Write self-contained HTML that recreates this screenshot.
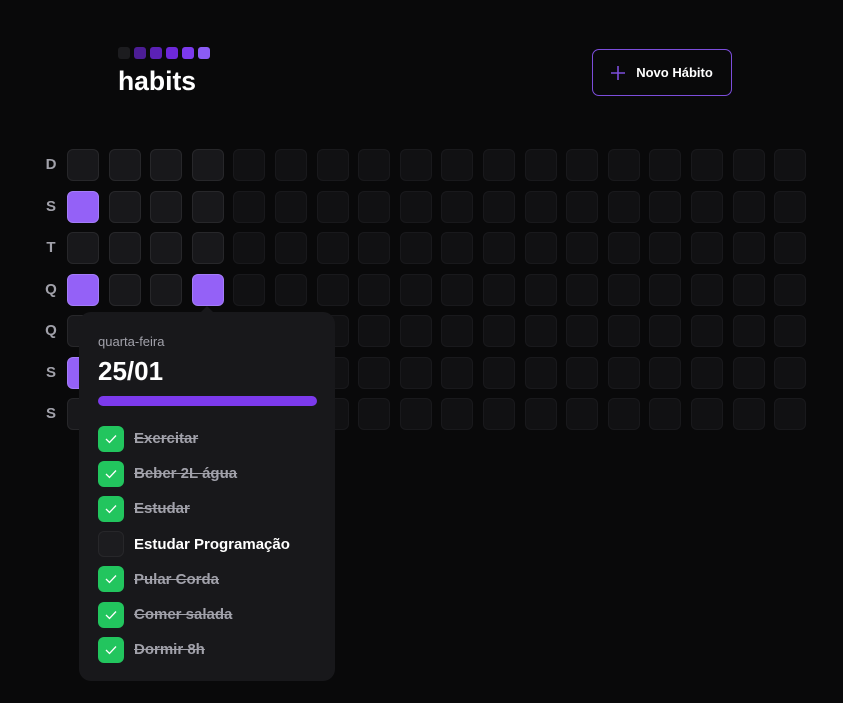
<!DOCTYPE html>
<html><head><meta charset="utf-8"><style>
*{box-sizing:border-box;margin:0;padding:0}
body{width:843px;height:703px;background:#09090a;font-family:"Liberation Sans",sans-serif;position:relative;overflow:hidden;color:#fff}
.logo{position:absolute;left:118px;top:47px;display:flex;gap:4px}
.logo i{width:12px;height:12px;border-radius:3px;display:block}
h1{position:absolute;left:118px;top:66px;font-size:26.5px;font-weight:bold;letter-spacing:0}
.btn{position:absolute;left:592px;top:49px;width:140px;height:47px;border:1px solid #7c4ddb;border-radius:7px;display:flex;align-items:center;justify-content:center;gap:11px;font-size:13px;font-weight:bold}
.labels{position:absolute;left:44px;top:149px}
.labels div{height:41.5px;line-height:32px;width:14px;text-align:center;color:#a1a1aa;font-weight:bold;font-size:15px}
.grid{position:absolute;left:67px;top:149px;display:grid;grid-template-columns:repeat(18,32px);column-gap:9.6px;row-gap:9.5px}
.grid div{width:32px;height:32px;border-radius:6px;background:#111113;border:1px solid #19191c}
.grid .a{background:#18181b;border-color:#27272a}
.grid .p{background:#9461f7;border-color:#a37cf8}
.pop{position:absolute;left:79px;top:312px;width:256px;height:369px;background:#18181b;border-radius:12px}
.arrow{position:absolute;left:200px;top:306px;width:0;height:0;border-left:7px solid transparent;border-right:7px solid transparent;border-bottom:7px solid #18181b}
.day{position:absolute;left:19px;top:22px;font-size:13px;color:#a1a1aa}
.date{position:absolute;left:19px;top:44px;font-size:26px;font-weight:bold}
.bar{position:absolute;left:19px;top:84px;width:219px;height:10px;border-radius:5px;background:#7c3aed}
.list{position:absolute;left:19px;top:109px}
.it{display:flex;align-items:center;height:35.2px;font-size:15px;font-weight:bold;color:#a1a1aa;text-decoration:line-through;gap:10px}
.cb{width:26px;height:26px;border-radius:6px;background:#22c55e;display:flex;align-items:center;justify-content:center;flex:none}
.cb.e{background:#1c1c1f;border:1px solid #27272a}
.it.n{text-decoration:none;color:#fff}
</style></head><body>
<div class="logo"><i style="background:#1c1c1f"></i><i style="background:#4c1d95"></i><i style="background:#5b21b6"></i><i style="background:#6d28d9"></i><i style="background:#7c3aed"></i><i style="background:#8b5cf6"></i></div>
<h1>habits</h1>
<div class="btn"><svg width="14" height="14" viewBox="0 0 14 14"><path d="M7 0v14M0 7h14" stroke="#7c4ddb" stroke-width="1.6"/></svg>Novo Hábito</div>
<div class="labels"><div>D</div><div>S</div><div>T</div><div>Q</div><div>Q</div><div>S</div><div>S</div></div>
<div class="grid">
<div class="a"></div><div class="a"></div><div class="a"></div><div class="a"></div><div></div><div></div><div></div><div></div><div></div><div></div><div></div><div></div><div></div><div></div><div></div><div></div><div></div><div></div>
<div class="p"></div><div class="a"></div><div class="a"></div><div class="a"></div><div></div><div></div><div></div><div></div><div></div><div></div><div></div><div></div><div></div><div></div><div></div><div></div><div></div><div></div>
<div class="a"></div><div class="a"></div><div class="a"></div><div class="a"></div><div></div><div></div><div></div><div></div><div></div><div></div><div></div><div></div><div></div><div></div><div></div><div></div><div></div><div></div>
<div class="p"></div><div class="a"></div><div class="a"></div><div class="p"></div><div></div><div></div><div></div><div></div><div></div><div></div><div></div><div></div><div></div><div></div><div></div><div></div><div></div><div></div>
<div class="a"></div><div class="a"></div><div class="a"></div><div class="a"></div><div></div><div></div><div></div><div></div><div></div><div></div><div></div><div></div><div></div><div></div><div></div><div></div><div></div><div></div>
<div class="p"></div><div class="a"></div><div class="a"></div><div class="a"></div><div></div><div></div><div></div><div></div><div></div><div></div><div></div><div></div><div></div><div></div><div></div><div></div><div></div><div></div>
<div class="a"></div><div class="a"></div><div class="a"></div><div class="a"></div><div></div><div></div><div></div><div></div><div></div><div></div><div></div><div></div><div></div><div></div><div></div><div></div><div></div><div></div>
</div>
<div class="arrow"></div>
<div class="pop">
<div class="day">quarta-feira</div>
<div class="date">25/01</div>
<div class="bar"></div>
<div class="list">
<div class="it"><span class="cb"><svg width="12" height="10" viewBox="0 0 12 10"><path d="M1 5l3.5 3.5L11 1.5" stroke="#fff" stroke-width="1.3" fill="none"/></svg></span>Exercitar</div>
<div class="it"><span class="cb"><svg width="12" height="10" viewBox="0 0 12 10"><path d="M1 5l3.5 3.5L11 1.5" stroke="#fff" stroke-width="1.3" fill="none"/></svg></span>Beber 2L água</div>
<div class="it"><span class="cb"><svg width="12" height="10" viewBox="0 0 12 10"><path d="M1 5l3.5 3.5L11 1.5" stroke="#fff" stroke-width="1.3" fill="none"/></svg></span>Estudar</div>
<div class="it n"><span class="cb e"></span>Estudar Programação</div>
<div class="it"><span class="cb"><svg width="12" height="10" viewBox="0 0 12 10"><path d="M1 5l3.5 3.5L11 1.5" stroke="#fff" stroke-width="1.3" fill="none"/></svg></span>Pular Corda</div>
<div class="it"><span class="cb"><svg width="12" height="10" viewBox="0 0 12 10"><path d="M1 5l3.5 3.5L11 1.5" stroke="#fff" stroke-width="1.3" fill="none"/></svg></span>Comer salada</div>
<div class="it"><span class="cb"><svg width="12" height="10" viewBox="0 0 12 10"><path d="M1 5l3.5 3.5L11 1.5" stroke="#fff" stroke-width="1.3" fill="none"/></svg></span>Dormir 8h</div>
</div>
</div>
</body></html>
